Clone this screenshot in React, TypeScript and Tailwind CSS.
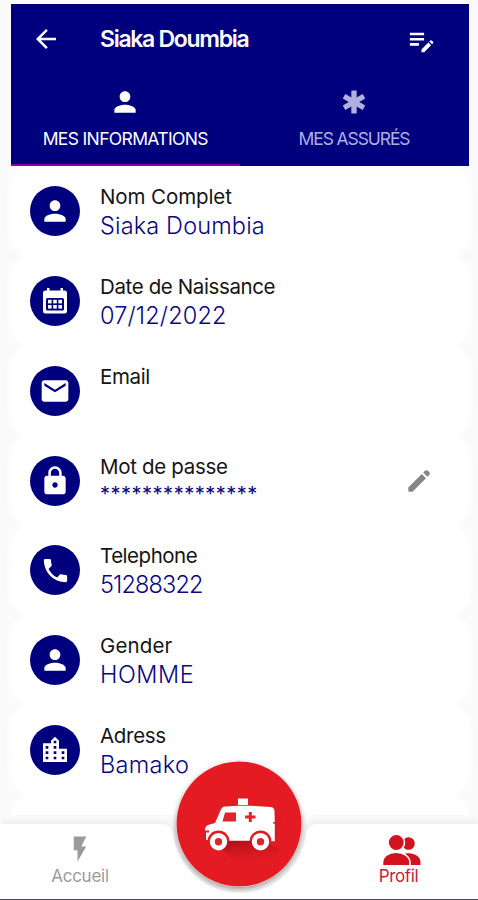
import React from "react";
import {
  MdArrowBack,
  MdEditNote,
  MdEmail,
  MdFlashOn,
  MdLocationCity,
  MdLock,
  MdPerson,
  MdPhone,
} from "react-icons/md";

function AsteriskIcon() {
  return (
    <svg width="24" height="24" viewBox="-12 -12 24 24" fill="currentColor">
      <rect x="-2.7" y="-11.5" width="5.400" height="23" rx="0.5" />
      <rect x="-2.7" y="-11.5" width="5.400" height="23" rx="0.5" transform="rotate(60)" />
      <rect x="-2.7" y="-11.5" width="5.400" height="23" rx="0.5" transform="rotate(120)" />
    </svg>
  );
}

function PencilIcon() {
  return (
    <svg width="24" height="24" viewBox="0 0 24 24" fill="#858585">
      <path d="M1.300 18.500L14.800 5l4.200 4.200L5.500 22.700H2.300a1 1 0 0 1-1-1z" />
      <path d="M16.200 3.600l1.800-1.800c.9-.9 2-.9 2.900 0l1.300 1.300c.9.9.9 2 0 2.900l-1.800 1.800z" />
    </svg>
  );
}

function CalendarIcon() {
  return (
    <svg width="26" height="28" viewBox="0 0 26 28">
      <path
        fill="#fff"
        d="M5 1h2.500v2.500h11V1H21v2.500h1.500a2.500 2.500 0 0 1 2.500 2.500v18a2.500 2.500 0 0 1-2.500 2.500h-19A2.500 2.500 0 0 1 1 24V6a2.500 2.500 0 0 1 2.500-2.500H5z"
      />
      <rect x="4" y="11" width="18" height="12.500" rx="1.500" fill="#00007f" />
      <g fill="#fff">
        <rect x="6" y="12.800" width="3.600" height="3.600" />
        <rect x="11.200" y="12.800" width="3.600" height="3.600" />
        <rect x="16.400" y="12.800" width="3.600" height="3.600" />
        <rect x="6" y="18" width="3.600" height="3.600" />
        <rect x="11.200" y="18" width="3.600" height="3.600" />
        <rect x="16.400" y="18" width="3.600" height="3.600" />
      </g>
    </svg>
  );
}

function PeopleIcon() {
  return (
    <svg width="38" height="32" viewBox="0 0 38 32" fill="#d3121f">
      <circle cx="25.500" cy="9.500" r="6.300" />
      <path d="M20 31V20.500c1.700-.9 3.700-1.300 6-1.300 6 0 11.500 3.500 11.500 9V31z" />
      <g stroke="#fff" strokeWidth="1.600">
        <circle cx="13.300" cy="8.500" r="8.200" />
        <path d="M-.5 31.800v-3C-.5 22.500 5.500 18.300 13 18.300s14 4.200 14 10.500v3z" />
      </g>
    </svg>
  );
}

function AmbulanceIcon() {
  return (
    <svg className="block" width="126" height="126" viewBox="0 0 126 126">
      <defs>
        <linearGradient id="cast" x1="0.2" y1="0" x2="0.500" y2="1">
          <stop offset="0" stopColor="#a00f16" stopOpacity="0.900" />
          <stop offset="1" stopColor="#e51b23" stopOpacity="0" />
        </linearGradient>
      </defs>
      <circle cx="63" cy="63" r="62.500" fill="#e51b23" />
      <path d="M42 84l26 25c16 0 30-8 36-20L88 79H46z" fill="url(#cast)" />
      <path d="M96 46l10 12-6 18-4 4z" fill="#b8141c" opacity="0.200" />
      <rect x="62" y="37.500" width="10" height="6.500" fill="#fff" />
      <path
        fill="#fff"
        d="M49 45.500h2l10-.8h12l22 1.300c2.500.3 3.500 2 3.500 4.500l.3 10.500h-1.500v1.800h1.500v17.500h-4a10.800 10.800 0 0 0-20.600-.5H53a10.800 10.800 0 0 0-20.500-1L30 79v-7.500h3v-2h-4v-1.500c0-2.300 2-3.800 4.500-4.500l5.500-1.500 5.500-12.500c.8-2.300 2-4 4.500-4z"
      />
      <path d="M49.500 51.500H60v9H46.500l2-7.200c.2-.8.500-1.300 1-1.800z" fill="#df242d" />
      <path d="M72.800 51h3v3.500h3.700v3h-3.700V61h-3v-3.500h-3.700v-3h3.700z" fill="#df242d" />
      <g fill="#df1a22">
        <path d="M31.500 80.500a11 11 0 0 1 22 0z" />
        <path d="M73.500 80.500a11 11 0 0 1 22 0z" />
      </g>
      <g fill="#df242d" stroke="#fff" strokeWidth="5">
        <circle cx="42.500" cy="80.700" r="6.200" />
        <circle cx="84.500" cy="80.700" r="6.200" />
      </g>
    </svg>
  );
}

type Field = {
  label: string;
  value: string;
  icon: React.ReactNode;
  labelClass: string;
  valueClass: string;
  editable?: boolean;
};

const VALUE = "text-[23.5px] font-[350] leading-[29px]";

const fields: Field[] = [
  { label: "Nom Complet", value: "Siaka Doumbia", icon: <MdPerson size={32} />, labelClass: "tracking-[-0.1px]", valueClass: `${VALUE} tracking-[0.15px]` },
  { label: "Date de Naissance", value: "07/12/2022", icon: <CalendarIcon />, labelClass: "tracking-[-0.38px]", valueClass: `${VALUE} tracking-[0.15px]` },
  { label: "Email", value: "", icon: <MdEmail size={32} />, labelClass: "tracking-[-0.35px]", valueClass: VALUE },
  { label: "Mot de passe", value: "***************", icon: <MdLock size={32} />, labelClass: "tracking-[-0.32px]", valueClass: "text-[20px] leading-[27px] tracking-[0.5px]", editable: true },
  { label: "Telephone", value: "51288322", icon: <MdPhone size={31} />, labelClass: "tracking-[-0.48px]", valueClass: `${VALUE} tracking-[-0.85px]` },
  { label: "Gender", value: "HOMME", icon: <MdPerson size={32} />, labelClass: "tracking-[0.15px]", valueClass: `${VALUE} tracking-[0.55px]` },
  { label: "Adress", value: "Bamako", icon: <MdLocationCity size={32} />, labelClass: "tracking-[-0.3px]", valueClass: `${VALUE} tracking-[0.3px]` },
];

function FieldCard({ field }: { field: Field }) {
  return (
    <div className="flex h-[89.85px] shrink-0 rounded-[24px] bg-white pl-[19px] shadow-[0_0_8px_2px_#fff]">
      <div className="mt-5 flex size-[50px] items-center justify-center rounded-full bg-[#00007f] text-white">
        {field.icon}
      </div>
      <div className="ml-5 flex-1 whitespace-nowrap pt-4">
        <div className={`text-[20.5px] font-[440] leading-[29px] text-[#151515] ${field.labelClass}`}>{field.label}</div>
        <div className={`text-[#0b0780] ${field.valueClass}`}>{field.value}</div>
      </div>
      {field.editable && (
        <div className="mr-[37.5px] mt-[33px]">
          <PencilIcon />
        </div>
      )}
    </div>
  );
}

export default function App() {
  return (
    <div className="relative flex h-[900px] w-[478px] flex-col overflow-hidden bg-[#fafafa] font-['Inter','Liberation_Sans',sans-serif]">
      <header className="relative z-10 ml-[11px] mt-1 h-[162px] w-[457.5px] shrink-0 bg-[#00007f] text-white">
        <div className="flex h-[70px] items-center pl-5">
          <MdArrowBack size={30} />
          <h1 className="ml-[39px] flex-1 whitespace-nowrap text-[23px] font-semibold tracking-[-1.3px]">Siaka Doumbia</h1>
          <MdEditNote size={31} className="mr-[32px] mt-[2px]" />
        </div>
        <div className="flex h-[92px]">
          <div className="flex w-[228.5px] flex-col items-center border-b-2 border-[#8a00a8] pt-[12px]">
            <MdPerson size={32} />
            <span className="mt-[10px] whitespace-nowrap text-[17.5px] leading-[22px] tracking-[-0.65px]">MES INFORMATIONS</span>
          </div>
          <div className="flex flex-1 flex-col items-center pt-[16px] text-[#b0b0e0]">
            <AsteriskIcon />
            <span className="mt-[14px] whitespace-nowrap text-[17.5px] leading-[22px] tracking-[-1.1px]">MES ASSURÉS</span>
          </div>
        </div>
      </header>

      <main className="ml-[11px] flex w-[457.5px] flex-col">
        {fields.map((field) => (
          <FieldCard key={field.label} field={field} />
        ))}
        <div className="h-[20px] shrink-0 rounded-t-[24px] bg-white" />
      </main>

      <nav className="absolute inset-x-0 bottom-0 h-[138px]">
        <svg className="absolute inset-0 drop-shadow-[0_0_5px_rgba(0,0,0,0.10)]" width="478" height="138" viewBox="0 0 478 138">
          <path
            d="M0 62h161c7 0 11 3 12 10a67 67 0 0 0 133 0c1-7 5-10 12-10h160v76H0z"
            fill="#fff"
          />
        </svg>
        <div className="absolute left-[176px] top-[-1px] rounded-full shadow-[0_2px_5px_rgba(0,0,0,0.4)]">
          <AmbulanceIcon />
        </div>
        <div className="relative flex h-full justify-between pt-[70px]">
          <div className="flex w-[160px] flex-col items-center pt-[2px] text-[#9b9b9b]">
            <MdFlashOn size={30} />
            <span className="mt-[1px] text-[17px] leading-[22px] tracking-[-0.25px]">Accueil</span>
          </div>
          <div className="flex w-[158px] flex-col items-center pt-[2px] text-[#c4213a]">
            <div className="ml-[6px]">
              <PeopleIcon />
            </div>
            <span className="-mt-[1px] mr-[1px] text-[17px] leading-[22px] tracking-[-0.4px]">Profil</span>
          </div>
        </div>
        <div className="absolute inset-x-0 bottom-0 h-[1.5px] bg-[#4a4a4c]" />
      </nav>
    </div>
  );
}
